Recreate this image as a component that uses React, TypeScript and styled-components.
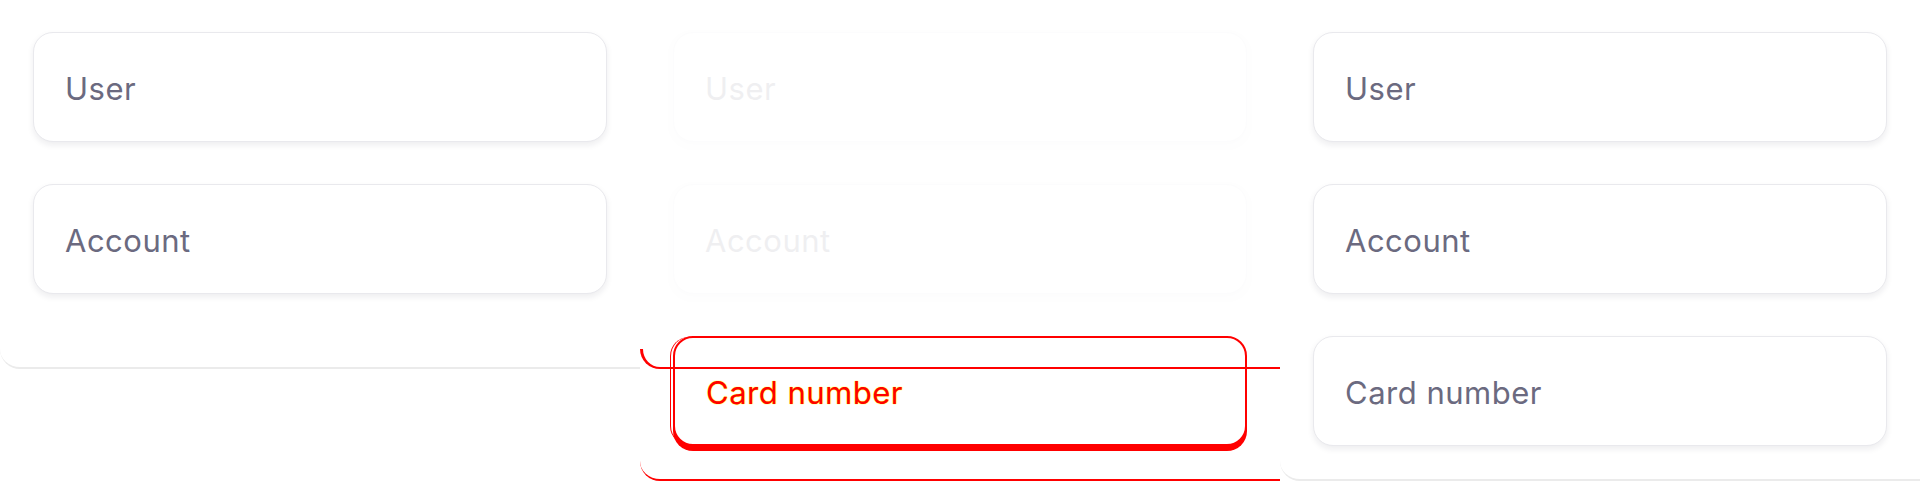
import styled, { createGlobalStyle } from "styled-components";

const GlobalStyle = createGlobalStyle`
  html, body {
    margin: 0;
    background: #ffffff;
    font-family: Inter, "Noto Sans", "Liberation Sans", sans-serif;
  }
`

const Strip = styled.main`
  display: flex;
  width: 1920px;
  height: 482px;
  overflow: hidden;
`

const Panel = styled.section`
  position: relative;
  flex: none;
  width: 640px;
`

const Card = styled.div<{ $height: number; $edge: string }>`
  box-sizing: border-box;
  height: ${p => p.$height}px;
  padding: 32px 33px 0;
  display: flex;
  flex-direction: column;
  gap: 42px;
  background: #ffffff;
  border-bottom: 2px solid ${p => p.$edge};
  border-bottom-left-radius: 20px;
`

const Field = styled.div<{ $faded?: boolean; $diff?: boolean }>`
  box-sizing: border-box;
  flex: none;
  height: 110px;
  display: flex;
  align-items: center;
  padding-left: 31px;
  padding-top: 2px;
  border-radius: 20px;
  background: #ffffff;
  border: 1px solid #e9e9ed;
  box-shadow: 0 3px 6px rgba(30, 30, 50, 0.08);
  font-size: 31px;
  letter-spacing: 0.5px;
  color: #6b6a80;
  opacity: ${p => (p.$faded ? 0.1 : 1)};

  ${p => p.$diff && `
    border: 2px solid #ff0000;
    box-shadow: 0 5px 0 0 #ff0000, -3px 0 0 -1px #ffffff, -4px 0 0 -1px #ff0000;
    color: #ff0000;
    text-shadow: 0 0 1px #ffff00, 0 0 1px #ffff00;
  `}
`

// ghost of the card's previous bottom edge, drawn over the content
const GhostEdge = styled.div<{ $top: number }>`
  position: absolute;
  left: 0;
  top: ${p => p.$top}px;
  width: 640px;
  height: 20px;
  box-sizing: border-box;
  border-left: 3px solid #ff0000;
  border-bottom: 2px solid #ff0000;
  border-bottom-left-radius: 20px;
  pointer-events: none;
`

const fields = ['User', 'Account']

const App = () => {
  return (
    <>
      <GlobalStyle />
      <Strip>
        <Panel>
          <Card $height={369} $edge="#ebebeb">
            {fields.map(f => <Field key={f}>{f}</Field>)}
          </Card>
        </Panel>
        <Panel>
          <Card $height={481} $edge="#ff0000">
            {fields.map(f => <Field key={f} $faded>{f}</Field>)}
            <Field $diff>Card number</Field>
          </Card>
          <GhostEdge $top={349} />
        </Panel>
        <Panel>
          <Card $height={481} $edge="#ebebeb">
            {fields.map(f => <Field key={f}>{f}</Field>)}
            <Field>Card number</Field>
          </Card>
        </Panel>
      </Strip>
    </>
  )
}

export default App
